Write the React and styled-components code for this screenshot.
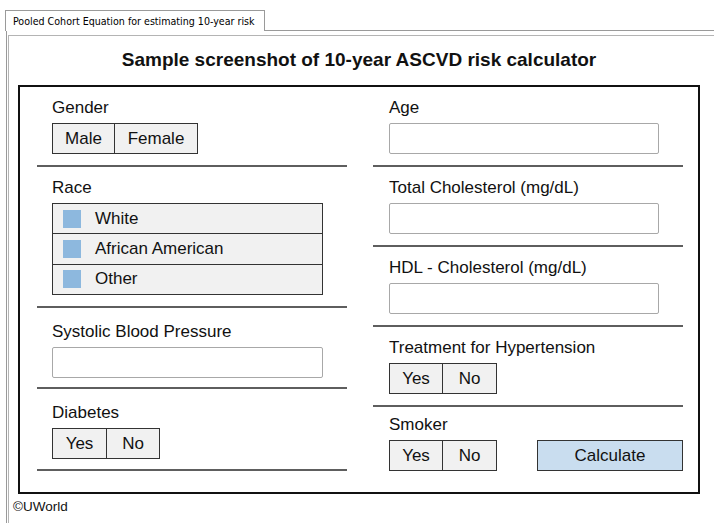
import React from "react";
import styled, { createGlobalStyle } from "styled-components";

const GlobalStyle = createGlobalStyle`
  body {
    margin: 0;
    background: #fff;
    font-family: "Liberation Sans", Arial, sans-serif;
    color: #111;
  }
  * { box-sizing: border-box; }
`;

const App = () => {
  return (
    <Page>
      <GlobalStyle />
      <TabBar>
        <Tab>Pooled Cohort Equation for estimating 10-year risk</Tab>
        <TabFiller />
      </TabBar>
      <Panel>
        <InnerFrame>
          <Title>Sample screenshot of 10-year ASCVD risk calculator</Title>
          <CalcBox>
            <Column>
              <Section>
                <Label>Gender</Label>
                <Segmented>
                  <SegButton $w={62}>Male</SegButton>
                  <SegButton $w={84}>Female</SegButton>
                </Segmented>
              </Section>
              <Section>
                <Label>Race</Label>
                <RaceList>
                  {["White", "African American", "Other"].map((r) => (
                    <RaceRow key={r}>
                      <Swatch />
                      {r}
                    </RaceRow>
                  ))}
                </RaceList>
              </Section>
              <Section $pt={14} $pb={9}>
                <Label>Systolic Blood Pressure</Label>
                <TextBox $w={271} />
              </Section>
              <Section $pt={14} $pb={10}>
                <Label>Diabetes</Label>
                <Segmented>
                  <SegButton $w={54}>Yes</SegButton>
                  <SegButton $w={54}>No</SegButton>
                </Segmented>
              </Section>
            </Column>
            <Column>
              <Section $right>
                <Label>Age</Label>
                <TextBox $w={270} />
              </Section>
              <Section $right>
                <Label>Total Cholesterol (mg/dL)</Label>
                <TextBox $w={270} />
              </Section>
              <Section $right>
                <Label>HDL - Cholesterol (mg/dL)</Label>
                <TextBox $w={270} />
              </Section>
              <Section $right>
                <Label>Treatment for Hypertension</Label>
                <Segmented>
                  <SegButton $w={53}>Yes</SegButton>
                  <SegButton $w={55}>No</SegButton>
                </Segmented>
              </Section>
              <Section $right $last $pt={8} $pb={0}>
                <Label>Smoker</Label>
                <ControlRow>
                  <Segmented>
                    <SegButton $w={53}>Yes</SegButton>
                    <SegButton $w={55}>No</SegButton>
                  </Segmented>
                  <CalcButton>Calculate</CalcButton>
                </ControlRow>
              </Section>
            </Column>
          </CalcBox>
          <Copyright>©UWorld</Copyright>
        </InnerFrame>
      </Panel>
    </Page>
  );
};

export default App;

const Page = styled.div`
  width: 714px;
  height: 523px;
  overflow: hidden;
`;

const TabBar = styled.div`
  display: flex;
  align-items: flex-end;
  padding: 10px 0 0 5px;
`;

const Tab = styled.div`
  height: 21px;
  padding: 4px 9px 0 7px;
  border: 1px solid #9a9a9a;
  border-bottom: none;
  background: #fff;
  font-family: "DejaVu Sans Condensed", "Liberation Sans", sans-serif;
  font-size: 10.6px;
  line-height: 13px;
  color: #000;
  white-space: nowrap;
`;

const TabFiller = styled.div`
  flex: 1;
  border-bottom: 1px solid #9a9a9a;
`;

const Panel = styled.div`
  margin-left: 6px;
  border-left: 1px solid #9a9a9a;
  padding: 4px 0 0 1px;
  height: 600px;
`;

const InnerFrame = styled.div`
  border-top: 1px solid #b4b4b4;
  border-left: 1px solid #b4b4b4;
  height: 100%;
`;

const Title = styled.h1`
  margin: 13px 0 14px;
  padding-left: 9px;
  width: 691px;
  text-align: center;
  font-size: 19px;
  line-height: 22px;
  font-weight: bold;
  color: #111;
`;

const CalcBox = styled.div`
  margin-left: 9px;
  width: 682px;
  border: 2px solid #111;
  display: grid;
  grid-template-columns: 310px 310px;
  column-gap: 26px;
  align-items: start;
  padding: 0 15px 21px 17px;
`;

const Column = styled.div`
  display: flex;
  flex-direction: column;
`;

const Section = styled.div`
  padding-top: ${(p) => p.$pt ?? 11}px;
  padding-bottom: ${(p) => p.$pb ?? 11}px;
  padding-left: ${(p) => (p.$right ? 16 : 15)}px;
  border-bottom: ${(p) => (p.$last ? "none" : "2px solid #5e5e5e")};
`;

const Label = styled.div`
  font-size: 17px;
  line-height: 19px;
  margin-bottom: 6px;
  color: #111;
`;

const Segmented = styled.div`
  display: inline-flex;
  border: 1px solid #333;
  height: 31px;
`;

const SegButton = styled.button`
  width: ${(p) => p.$w - 1}px;
  height: 29px;
  padding: 0;
  border: none;
  border-left: 1px solid #333;
  background: #f1f1f1;
  font-family: "Liberation Sans", Arial, sans-serif;
  font-size: 17px;
  color: #111;

  &:first-child {
    border-left: none;
  }
`;

const RaceList = styled.div`
  display: flex;
  flex-direction: column;
  width: 271px;
  height: 92px;
  border: 1px solid #333;
  background: #f1f1f1;
`;

const RaceRow = styled.div`
  flex: 1;
  display: flex;
  align-items: center;
  padding-left: 10px;
  font-size: 17px;
  gap: 14px;
  border-top: 1px solid #333;

  &:first-child {
    border-top: none;
  }
`;

const Swatch = styled.span`
  width: 18px;
  height: 18px;
  background: #8db8de;
`;

const TextBox = styled.div`
  width: ${(p) => p.$w}px;
  height: 31px;
  border: 1px solid #a8a8a8;
  border-radius: 2px;
  background: #fff;
`;

const ControlRow = styled.div`
  display: flex;
  align-items: center;
`;

const CalcButton = styled.button`
  margin-left: 40px;
  width: 149px;
  height: 31px;
  border: 1px solid #333;
  background: #c9ddef;
  font-family: "Liberation Sans", Arial, sans-serif;
  font-size: 17px;
  color: #111;
`;

const Copyright = styled.div`
  margin: 5px 0 0 4px;
  font-size: 13.5px;
  line-height: 15px;
  color: #111;
`;
